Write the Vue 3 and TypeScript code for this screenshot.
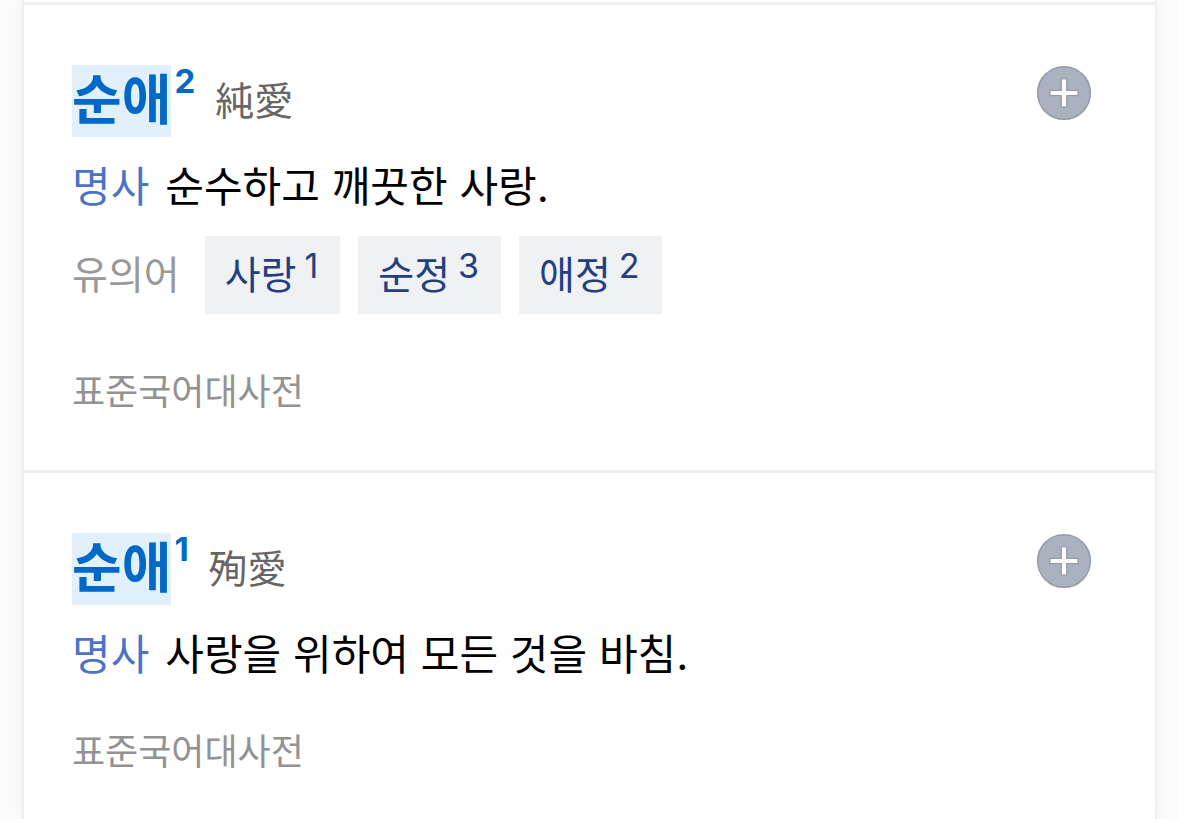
<script setup lang="ts">
interface Related {
  word: string
  sense: number
}

interface Entry {
  word: string
  sense: number
  hanja: string
  pos: string
  meaning: string
  related: Related[]
  source: string
}

const entries: Entry[] = [
  {
    word: '순애',
    sense: 2,
    hanja: '純愛',
    pos: '명사',
    meaning: '순수하고 깨끗한 사랑.',
    related: [
      { word: '사랑', sense: 1 },
      { word: '순정', sense: 3 },
      { word: '애정', sense: 2 },
    ],
    source: '표준국어대사전',
  },
  {
    word: '순애',
    sense: 1,
    hanja: '殉愛',
    pos: '명사',
    meaning: '사랑을 위하여 모든 것을 바침.',
    related: [],
    source: '표준국어대사전',
  },
]
</script>

<template>
  <main class="page">
    <div class="card">
      <article v-for="entry in entries" :key="entry.hanja" class="entry">
        <header class="head">
          <h2 class="title">
            <a href="#" class="word"><mark class="hit">{{ entry.word }}</mark><sup class="sense">{{ entry.sense }}</sup></a>
            <span class="hanja">{{ entry.hanja }}</span>
          </h2>
          <button type="button" class="add" aria-label="단어장에 추가">
            <svg viewBox="0 0 56 56" aria-hidden="true">
              <circle cx="28" cy="28" r="26.3" fill="#a9b2be" stroke="#959da9" stroke-width="1.6" />
              <path
                d="M25.3 14h5.4v11.3H42v5.4H30.7V42h-5.4V30.7H14v-5.4h11.3z"
                fill="#fff"
                stroke="#949ca8"
                stroke-width="1.2"
              />
            </svg>
          </button>
        </header>
        <p class="meaning"><span class="pos">{{ entry.pos }}</span>{{ entry.meaning }}</p>
        <div v-if="entry.related.length" class="related">
          <span class="label">유의어</span>
          <a v-for="item in entry.related" :key="item.word" href="#" class="chip">
            {{ item.word }}<sup class="chip-sense">{{ item.sense }}</sup>
          </a>
        </div>
        <p class="source">{{ entry.source }}</p>
      </article>
    </div>
  </main>
</template>

<style>
body {
  margin: 0;
  background: #fbfbfc;
}
</style>

<style scoped>
.page {
  padding: 0 24px;
  font-family: Inter, 'Noto Sans CJK KR', sans-serif;
  color: #000;
  overflow: hidden;
}

.card {
  box-sizing: border-box;
  min-height: 100vh;
  padding-top: 2px;
  background: #fff;
  box-shadow: 0 0 3px 1px #e6e7ea, 0 0 14px #f1f1f3;
}

.entry {
  padding: 60px 63px 52px 48px;
  border-top: 3px solid #eff0f2;
}

.entry:last-child {
  padding-bottom: 40px;
}

.head,
.title,
.word,
.related,
.chip {
  display: flex;
}

.head {
  justify-content: space-between;
  align-items: flex-start;
}

.title {
  margin: 0;
  font-size: 54px;
  line-height: 72px;
}

.word {
  color: #0068c8;
  text-decoration: none;
}

.hit {
  background: #e1f0fa;
  color: inherit;
}

.sense {
  margin-left: 3px;
  font-size: 33px;
  line-height: 32px;
}

.hanja {
  margin-left: 20px;
  font-size: 39px;
  font-weight: 400;
  color: #666;
}

.add {
  width: 56px;
  height: 56px;
  padding: 0;
  border: 0;
  background: none;
  cursor: pointer;
}

.add svg {
  display: block;
}

.meaning {
  margin: 20px 0 0;
  font-size: 42px;
  font-weight: 400;
  line-height: 60px;
}

.pos {
  margin-right: 16px;
  color: #4c73c7;
}

.related {
  align-items: center;
  gap: 18px;
  margin-top: 19px;
  padding-bottom: 11px;
  font-size: 39px;
  line-height: 78px;
}

.label {
  margin-right: 7px;
  color: #999;
}

.chip {
  padding: 0 22px 0 20px;
  background: #f0f1f3;
  color: #243f80;
  text-decoration: none;
}

.chip-sense {
  margin-left: 8px;
  font-size: 34px;
  line-height: 60px;
}

.source {
  margin: 41px 0 0;
  font-size: 36px;
  line-height: 52px;
  color: #929292;
}
</style>
